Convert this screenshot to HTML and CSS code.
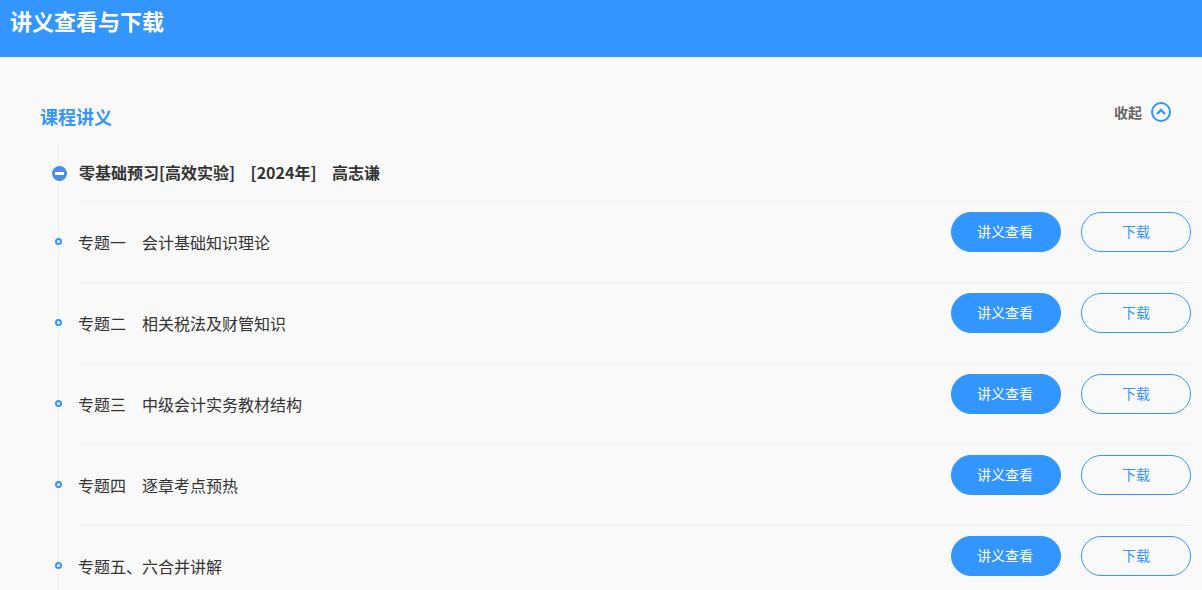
FILE: index.html
```html
<!DOCTYPE html>
<html lang="zh-CN">
<head>
    <meta charset="UTF-8">
    <title>讲义查看与下载</title>
    <link rel="stylesheet" href="styles.css">
</head>
<body>
    <div class="page-header">
        <h1>讲义查看与下载</h1>
    </div>

    <div class="content">
        <div class="section-head">
            <h2>课程讲义</h2>
            <div class="collapse">
                <span>收起</span>
                <svg class="collapse-icon" width="20" height="20" viewBox="0 0 20 20">
                    <circle cx="10" cy="10" r="9" fill="none" stroke="#3396ff" stroke-width="2"/>
                    <path d="M6 12 L10 8 L14 12" fill="none" stroke="#3396ff" stroke-width="2.4"/>
                </svg>
            </div>
        </div>

        <div class="tree">
            <div class="group-title">
                <span class="minus"></span>
                <span>零基础预习[高效实验]</span>
                <span class="gap">[2024年]</span>
                <span class="gap">高志谦</span>
            </div>
            <div class="row">
                <span class="dot"></span>
                <div class="row-name"><span class="topic">专题一</span>会计基础知识理论</div>
                <a class="btn btn-view">讲义查看</a>
                <a class="btn btn-down">下载</a>
            </div>
            <div class="row">
                <span class="dot"></span>
                <div class="row-name"><span class="topic">专题二</span>相关税法及财管知识</div>
                <a class="btn btn-view">讲义查看</a>
                <a class="btn btn-down">下载</a>
            </div>
            <div class="row">
                <span class="dot"></span>
                <div class="row-name"><span class="topic">专题三</span>中级会计实务教材结构</div>
                <a class="btn btn-view">讲义查看</a>
                <a class="btn btn-down">下载</a>
            </div>
            <div class="row">
                <span class="dot"></span>
                <div class="row-name"><span class="topic">专题四</span>逐章考点预热</div>
                <a class="btn btn-view">讲义查看</a>
                <a class="btn btn-down">下载</a>
            </div>
            <div class="row">
                <span class="dot"></span>
                <div class="row-name">专题五、六合并讲解</div>
                <a class="btn btn-view">讲义查看</a>
                <a class="btn btn-down">下载</a>
            </div>
        </div>
    </div>
</body>
</html>
```
FILE: styles.css
```css
html, body {
    height: 590px;
    overflow: hidden;
}
body {
    margin: 0;
    background-color: #f9f9f9;
    font-family: "Noto Sans CJK SC", "Liberation Sans", sans-serif;
    color: #333;
}
.page-header {
    height: 57px;
    background-color: #3396ff;
}
h1 {
    margin: 0;
    padding-left: 10px;
    font-size: 22px;
    line-height: 40px;
    font-weight: 700;
    color: #fff;
}
.content {
    padding: 0 11px 0 41px;
}
.section-head {
    display: flex;
    justify-content: space-between;
    height: 88px;
    align-items: center;
}
h2 {
    margin: 30px 0 0 -1px;
    font-size: 18px;
    line-height: 24px;
    font-weight: 700;
    color: #3396ff;
}
.collapse {
    display: flex;
    align-items: center;
    gap: 9px;
    margin: 22px 20px 0 0;
    font-size: 14px;
    font-weight: 700;
    color: #666;
}
.tree {
    margin-left: 17px;
    border-left: 1px solid #eee;
    padding-left: 20px;
}
.group-title {
    position: relative;
    display: flex;
    align-items: center;
    height: 54px;
    padding-bottom: 2px;
    font-size: 16px;
    font-weight: 700;
    color: #333;
}
.gap {
    margin-left: 15.5px;
}
.minus {
    position: absolute;
    left: -27px;
    top: 21px;
    width: 15px;
    height: 15px;
    border-radius: 50%;
    background-color: #4a8ce8;
}
.minus::after {
    content: "";
    position: absolute;
    left: 3px;
    top: 6px;
    width: 9px;
    height: 3px;
    background-color: #fff;
}
.row {
    position: relative;
    display: flex;
    align-items: flex-start;
    height: 80px;
    border-top: 1px solid #eee;
}
.dot {
    position: absolute;
    left: -24px;
    top: 36px;
    width: 7px;
    height: 7px;
    box-sizing: border-box;
    border: 2px solid #3396ff;
    border-radius: 50%;
    background-color: #fff;
}
.row-name {
    flex: 1;
    margin: 28px 0 0 -1px;
    font-size: 16px;
    line-height: 24px;
    color: #333;
}
.topic {
    margin-right: 16px;
}
.btn {
    box-sizing: border-box;
    width: 110px;
    height: 40px;
    margin-top: 10px;
    border-radius: 20px;
    font-size: 14px;
    line-height: 36px;
    text-align: center;
}
.btn-view {
    padding-right: 2px;
    background-color: #3396ff;
    border: 1px solid #3396ff;
    color: #fff;
}
.btn-down {
    margin-left: 20px;
    border: 1px solid #3396ff;
    color: #3396ff;
}
```
